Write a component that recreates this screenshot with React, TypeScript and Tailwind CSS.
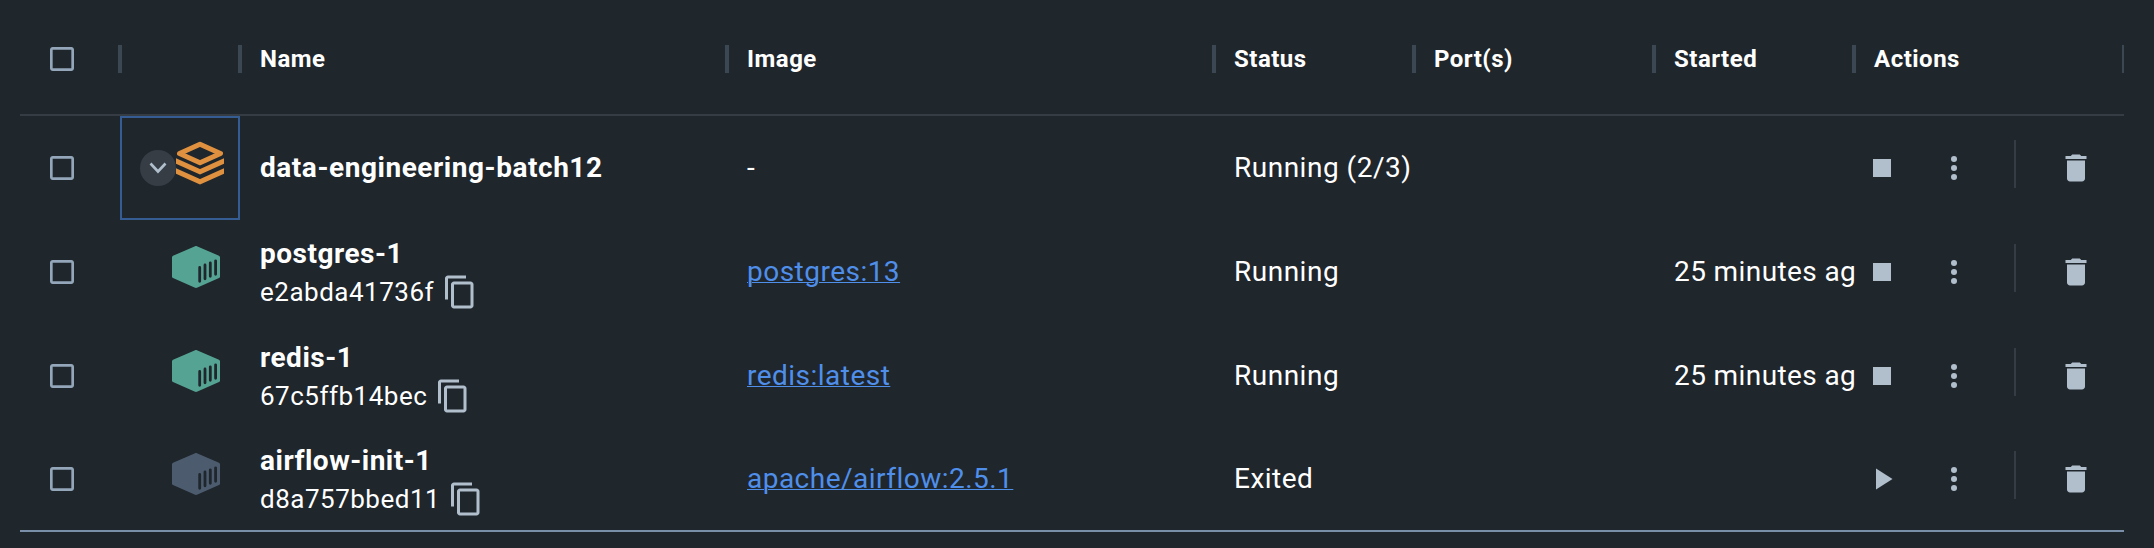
import type { ReactNode } from "react";

const GRID = "grid grid-cols-[100px_120px_487px_487px_200px_240px_200px_270px]";

type Kind = "running" | "exited";

interface Container {
  name: string;
  id: string;
  image: string;
  status: string;
  started: string;
  kind: Kind;
}

const containers: Container[] = [
  { name: "postgres-1", id: "e2abda41736f", image: "postgres:13", status: "Running", started: "25 minutes ag", kind: "running" },
  { name: "redis-1", id: "67c5ffb14bec", image: "redis:latest", status: "Running", started: "25 minutes ag", kind: "running" },
  { name: "airflow-init-1", id: "d8a757bbed11", image: "apache/airflow:2.5.1", status: "Exited", started: "", kind: "exited" },
];

function Checkbox() {
  return (
    <div className="flex items-center pl-[26px]">
      <svg viewBox="0 0 24 24" className="size-8 fill-[#94a7ba]">
        <path d="M19 5v14H5V5h14m0-2H5c-1.100 0-2 .9-2 2v14c0 1.100.9 2 2 2h14c1.100 0 2-.9 2-2V5c0-1.100-.9-2-2-2z" />
      </svg>
    </div>
  );
}

function StackIcon() {
  return (
    <svg viewBox="0 0 48 44" className="mb-[10px] h-11 w-12 fill-none stroke-[#e0913f] stroke-[5]">
      <path d="M24 3.300 44.500 12.500 24 21.700 3.500 12.500Z" strokeLinejoin="round" />
      <path d="M-1 19.500 24 30.700 49 19.500" />
      <path d="M-1 29.500 24 40.700 49 29.500" />
    </svg>
  );
}

function ContainerIcon({ kind }: { kind: Kind }) {
  return (
    <svg viewBox="0 0 48 42" className={`h-[42px] w-12 ${kind === "running" ? "fill-[#55a493]" : "fill-[#4c5c6e]"}`}>
      <path d="M22.500.400a3 3 0 0 1 3 0L47 9.800q1 .5 1 1.500V30.500q0 1-1 1.500L25.500 41.500a3 3 0 0 1-3 0L1 32.100q-1-.5-1-1.500V11.300q0-1 1-1.500Z" />
      <g className="stroke-[#1f262c] stroke-[2.8]" strokeLinecap="round">
        <path d="M27.700 21.500V35.300M33 19V32.800M38.300 16.800V30.300M43.600 14.800V28.300" />
      </g>
    </svg>
  );
}

function CopyIcon() {
  return (
    <svg viewBox="0 0 24 24" className="size-9 fill-[#b1bfcd]">
      <path d="M16 1H4c-1.100 0-2 .9-2 2v14h2V3h12V1zm3 4H8c-1.100 0-2 .9-2 2v14c0 1.100.9 2 2 2h11c1.100 0 2-.9 2-2V7c0-1.100-.9-2-2-2zm0 16H8V7h11v14z" />
    </svg>
  );
}

function Actions({ running }: { running: boolean }) {
  return (
    <div className="flex items-center pl-[10px]">
      <svg viewBox="0 0 24 24" className="size-9 fill-[#b1bfcd]">
        {running ? <path d="M6 6h12v12H6z" /> : <path d="M8 5v14l11-7z" />}
      </svg>
      <svg viewBox="0 0 24 24" className="ml-9 size-9 fill-[#b1bfcd]">
        <circle cx="12" cy="6" r="2" />
        <circle cx="12" cy="12" r="2" />
        <circle cx="12" cy="18" r="2" />
      </svg>
      <div className="mb-2 ml-[42px] h-12 w-0.5 bg-[#353c44]" />
      <svg viewBox="0 0 24 24" className="ml-[42px] size-9 fill-[#b1bfcd]">
        <path d="M6 19c0 1.100.9 2 2 2h8c1.100 0 2-.9 2-2V7H6v12zM19 4h-3.500l-1-1h-5l-1 1H5v2h14V4z" />
      </svg>
    </div>
  );
}

function HeaderCell({ children, last }: { children?: ReactNode; last?: boolean }) {
  return (
    <div className="flex items-center justify-between pl-5">
      <span>{children}</span>
      <div className={last ? "h-7 w-0.5 bg-[#3b4853]" : "-mr-0.5 h-7 w-1 bg-[#3b4853]"} />
    </div>
  );
}

export default function App() {
  return (
    <div className="h-[548px] w-[2154px] bg-[#1f262c] pl-5 font-['Roboto',sans-serif] text-[28px] tracking-[0.5px] text-white">
      <div className="w-[2104px]">
        <div className={`${GRID} h-[116px] border-b-2 border-[#353c44] pt-1 text-[24px] font-bold`}>
          <div className="flex items-center justify-between">
            <Checkbox />
            <div className="-mr-0.5 h-7 w-1 bg-[#3b4853]" />
          </div>
          <HeaderCell />
          <HeaderCell>Name</HeaderCell>
          <HeaderCell>Image</HeaderCell>
          <HeaderCell>Status</HeaderCell>
          <HeaderCell>Port(s)</HeaderCell>
          <HeaderCell>Started</HeaderCell>
          <HeaderCell last>Actions</HeaderCell>
        </div>

        <div className={`${GRID} h-[104px]`}>
          <Checkbox />
          <div className="flex items-center border-2 border-[#365d93] pl-[18px]">
            <div className="flex size-9 shrink-0 items-center justify-center rounded-full bg-[#363d45]">
              <svg viewBox="0 0 18 12" className="h-3 w-[18px] fill-none stroke-[#b1bfcd] stroke-[2.6]">
                <path d="M1.500 1.500 9 9.500 16.500 1.500" />
              </svg>
            </div>
            <StackIcon />
          </div>
          <div className="flex items-center pl-5 font-bold tracking-[0.55px]">data-engineering-batch12</div>
          <div className="flex items-center pl-5">-</div>
          <div className="flex items-center whitespace-nowrap pl-5">Running (2/3)</div>
          <div />
          <div />
          <Actions running />
        </div>

        {containers.map((c) => (
          <div key={c.id} className={`${GRID} h-[104px] last:border-b-2 last:border-[#7990a8]`}>
            <Checkbox />
            <div className="flex items-center pb-[10px] pl-[52px]">
              <ContainerIcon kind={c.kind} />
            </div>
            <div className="flex flex-col justify-center pl-5 pt-0.5">
              <div className="h-[38px] font-bold leading-[38px]">{c.name}</div>
              <div className="flex h-[38px] items-center gap-2 text-[26px]">
                {c.id}
                <CopyIcon />
              </div>
            </div>
            <div className="flex items-center pl-5">
              <a className="tracking-[0.48px] text-[#4f8fea] underline decoration-1 underline-offset-[1px]">{c.image}</a>
            </div>
            <div className="flex items-center pl-5">{c.status}</div>
            <div />
            <div className="flex items-center whitespace-nowrap pl-5 tracking-[0.4px]">{c.started}</div>
            <Actions running={c.kind === "running"} />
          </div>
        ))}
      </div>
    </div>
  );
}
